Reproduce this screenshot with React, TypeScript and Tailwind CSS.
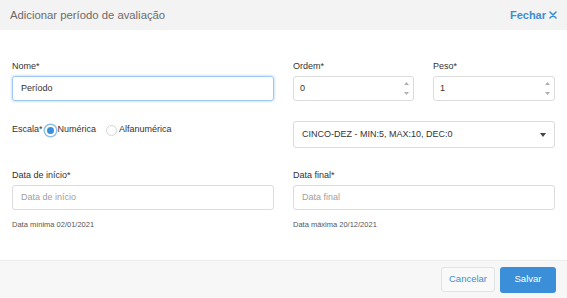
import React from "react";

const font = { fontFamily: '"Liberation Sans", Arial, Helvetica, sans-serif' };

function Spinner() {
  return (
    <div className="flex flex-col items-center gap-[7px] mr-[4px]">
      <svg width="5" height="3" viewBox="0 0 5 3"><path d="M2.5 0 L5 3 L0 3 Z" fill="#b0b0b0" /></svg>
      <svg width="5" height="3" viewBox="0 0 5 3"><path d="M0 0 L5 0 L2.5 3 Z" fill="#b0b0b0" /></svg>
    </div>
  );
}

export default function App() {
  return (
    <div className="w-[567px] h-[298px] bg-white flex flex-col text-[#333]" style={font}>
      <div className="h-[30px] shrink-0 bg-[#f3f3f3] flex items-center justify-between pl-[10px] pr-[10px]">
        <span className="text-[11.3px] text-[#6b6b6b]">Adicionar período de avaliação</span>
        <span className="flex items-center gap-[3px] text-[11px] font-bold text-[#3b8fd8]">
          Fechar
          <svg width="8" height="8" viewBox="0 0 8 8"><path d="M1 1 L7 7 M7 1 L1 7" stroke="#3b8fd8" strokeWidth="1.6" strokeLinecap="round" /></svg>
        </span>
      </div>

      <div className="flex-1 px-[12px] pt-[30px]">
        <div className="grid grid-cols-[262px_121px_122px] gap-x-[19px]">
          <div className="flex flex-col">
            <label className="text-[9px] leading-[13px] h-[13px] text-[#333]">Nome*</label>
            <div className="mt-[3px] h-[25px] rounded-[3px] border border-[#9ec9f1] shadow-[0_0_2px_1px_rgba(120,180,240,0.35)] flex items-center px-[8px] text-[9px] text-[#333]">
              Período
            </div>
          </div>
          <div className="flex flex-col">
            <label className="text-[9px] leading-[13px] h-[13px] text-[#333]">Ordem*</label>
            <div className="mt-[3px] h-[25px] rounded-[3px] border border-[#dcdcdc] flex items-center justify-between pl-[6px] text-[9px] text-[#333]">
              0
              <Spinner />
            </div>
          </div>
          <div className="flex flex-col">
            <label className="text-[9px] leading-[13px] h-[13px] text-[#333]">Peso*</label>
            <div className="mt-[3px] h-[25px] rounded-[3px] border border-[#dcdcdc] flex items-center justify-between pl-[6px] text-[9px] text-[#333]">
              1
              <Spinner />
            </div>
          </div>
        </div>

        <div className="grid grid-cols-[262px_262px] gap-x-[19px] mt-[20px]">
          <div className="flex items-center h-[18px] text-[9px]">
            <span className="text-[#333]">Escala*</span>
            <span className="ml-[2px] w-[11px] h-[11px] rounded-full bg-[#3b8fd8] border-[2px] border-white shadow-[0_0_0_1.5px_#8ec0ee]" />
            <span className="ml-[2px] text-[#333]">Numérica</span>
            <span className="ml-[10px] w-[11px] h-[11px] rounded-full border border-[#d6d6d6] bg-white" />
            <span className="ml-[2px] text-[#333]">Alfanumérica</span>
          </div>
          <div className="h-[27px] rounded-[3px] border border-[#dcdcdc] flex items-center justify-between pl-[8px] pr-[8px] text-[9px] text-[#333]">
            CINCO-DEZ - MIN:5, MAX:10, DEC:0
            <svg width="6" height="4" viewBox="0 0 6 4"><path d="M0 0 L6 0 L3 4 Z" fill="#444" /></svg>
          </div>
        </div>

        <div className="grid grid-cols-[262px_262px] gap-x-[19px] mt-[21px]">
          <div className="flex flex-col">
            <label className="text-[9px] leading-[13px] h-[13px] text-[#333]">Data de início*</label>
            <div className="mt-[3px] h-[25px] rounded-[3px] border border-[#dcdcdc] flex items-center px-[8px] text-[9px] text-[#a0a0a0]">
              Data de início
            </div>
            <span className="mt-[10px] text-[7.5px] leading-[10px] text-[#555]">Data mínima 02/01/2021</span>
          </div>
          <div className="flex flex-col">
            <label className="text-[9px] leading-[13px] h-[13px] text-[#333]">Data final*</label>
            <div className="mt-[3px] h-[25px] rounded-[3px] border border-[#dcdcdc] flex items-center px-[8px] text-[9px] text-[#a0a0a0]">
              Data final
            </div>
            <span className="mt-[10px] text-[7.5px] leading-[10px] text-[#555]">Data máxima 20/12/2021</span>
          </div>
        </div>
      </div>

      <div className="h-[38px] shrink-0 bg-[#f7f7f7] border-t border-[#ececec] flex items-center justify-end gap-[5px] pr-[11px]">
        <button className="h-[25px] w-[54px] rounded-[3px] border border-[#e3e3e3] bg-[#f9f9f9] text-[9.5px] text-[#3b8fd8]">Cancelar</button>
        <button className="h-[26px] w-[56px] rounded-[3px] bg-[#3a8fd8] text-[9.5px] text-white">Salvar</button>
      </div>
    </div>
  );
}
